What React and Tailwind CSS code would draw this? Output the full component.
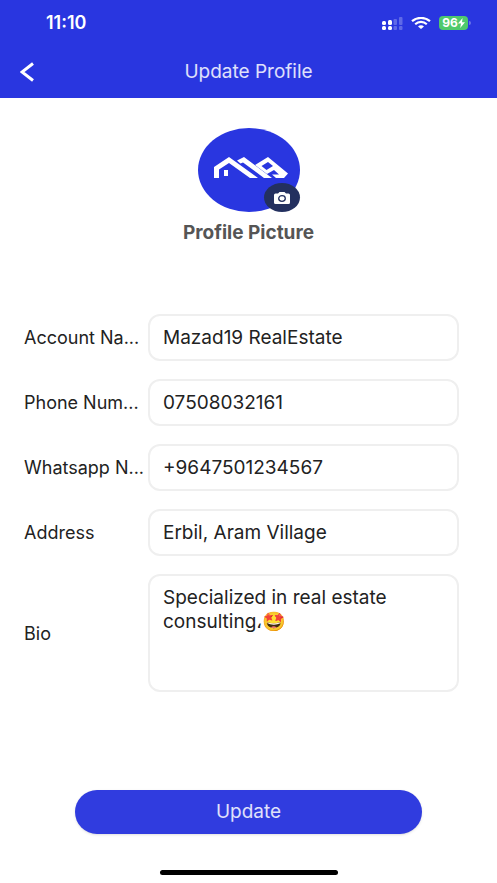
import { useState } from "react";

const initialProfile = {
    accountName: "Mazad19 RealEstate",
    phone: "07508032161",
    whatsapp: "+9647501234567",
    address: "Erbil, Aram Village",
    bio: "Specialized in real estate consulting،🤩",
};

const fields = [
    { name: "accountName", label: "Account Na...", type: "text" },
    { name: "phone", label: "Phone Num...", type: "tel" },
    { name: "whatsapp", label: "Whatsapp N...", type: "tel" },
    { name: "address", label: "Address", type: "text" },
];

const StatusBar = () => (
    <div className="flex items-center justify-between h-[46px] pl-[46px] pr-[26px]">
        <span className="text-[18px] leading-6 font-semibold">11:10</span>
        <div className="flex items-center gap-2">
            {/* Dual SIM signal */}
            <svg viewBox="0 0 22 13" className="w-[22px] h-[13px]" fill="currentColor">
                <rect x="1" y="4" width="4" height="4" rx="1.5" />
                <rect x="1" y="9" width="4" height="4" rx="1.5" />
                <rect x="7" y="3" width="4" height="5" rx="1.5" />
                <rect x="7" y="9" width="4" height="4" rx="1.5" />
                <g opacity="0.25">
                    <rect x="12.5" y="2" width="3.5" height="6" rx="1" />
                    <rect x="12.5" y="9" width="3.5" height="4" rx="1" />
                    <rect x="18" y="0" width="3.5" height="8" rx="1" />
                    <rect x="18" y="9" width="3.5" height="4" rx="1" />
                </g>
            </svg>
            <svg viewBox="0 0 20 12" className="w-5 h-3" fill="none" stroke="currentColor" strokeWidth="2.2">
                <path d="M1 4.2C6 -0.2 14 -0.2 19 4.2" />
                <path d="M4.2 7.2C7.5 4.2 12.5 4.2 15.8 7.2" />
                <path d="M7 9.4C8.8 7.9 11.2 7.9 13 9.4L10 12Z" fill="currentColor" stroke="none" />
            </svg>
            <div className="flex items-center gap-px">
                <div className="flex items-center justify-center w-[29px] h-[14px] rounded bg-[#4fc96c]">
                    <span className="text-xs leading-3 font-bold">96</span>
                    <svg viewBox="0 0 7 10" className="w-[7px] h-[10px]" fill="currentColor">
                        <path d="M4.6 0L0 5.6H3L2.2 10L7 4.2H4Z" />
                    </svg>
                </div>
                <div className="w-[2px] h-1 rounded-r bg-white/30" />
            </div>
        </div>
    </div>
);

const Avatar = () => (
    <div className="relative w-[102px] h-[84px]">
        <svg viewBox="0 0 102 84" className="w-full h-full">
            <ellipse cx="51" cy="42" rx="51" ry="42" fill="#2936e0" />
            <g fill="#fff">
                {/* House */}
                <path d="M16 50V39L31 29L60 50H52L31 35L21 41.5V50Z" />
                <rect x="26" y="42" width="4" height="6" />
                {/* Middle roof */}
                <path d="M39 32.5L46 29L74 50H66L45 34.5L42.5 35.500Z" />
                {/* Right roof, folded into a 9 */}
                <path fillRule="evenodd" d="M57 37L70 29L90 45.500L86 50H78L74 46.500H81L76 42L69 46ZM63.500 38L68.500 42L75 38L70 34Z" />
            </g>
        </svg>
        <button
            type="button"
            aria-label="Change picture"
            className="absolute right-0 bottom-0 flex items-center justify-center w-9 h-[29px] rounded-[50%] bg-[#23305f] text-white"
        >
            <svg viewBox="0 0 16 12" className="w-4 h-3">
                <path d="M4 1.500L5.500 0H10.500L12 1.500H14.500Q16 1.500 16 3V10.500Q16 12 14.500 12H1.500Q0 12 0 10.500V3Q0 1.500 1.500 1.500Z" fill="currentColor" />
                <ellipse cx="8" cy="6.500" rx="3.300" ry="2.800" fill="none" stroke="#23305f" strokeWidth="1.300" />
            </svg>
        </button>
    </div>
);

const App = () => {
    const [profile, setProfile] = useState(initialProfile);

    const handleChange = (e) => setProfile((prev) => ({ ...prev, [e.target.name]: e.target.value }));
    const handleSubmit = (e) => e.preventDefault();

    return (
        <div className="flex flex-col min-h-screen bg-white font-['Inter','Noto_Sans',sans-serif] text-[#222]">
            <header className="bg-[#2936e0] text-white">
                <StatusBar />
                <div className="grid grid-cols-[1fr_auto_1fr] items-center h-[52px] px-5">
                    <button type="button" aria-label="Back" className="w-4 h-5">
                        <svg viewBox="0 0 16 20" className="w-4 h-5" fill="none" stroke="currentColor" strokeWidth="3">
                            <path d="M13 1.500L2 10L13 18.500" />
                        </svg>
                    </button>
                    <h1 className="text-[19px] leading-6 text-white/85">Update Profile</h1>
                </div>
            </header>

            <form onSubmit={handleSubmit} className="flex flex-col flex-1">
                <section className="flex flex-col items-center gap-2 pt-[30px]">
                    <Avatar />
                    <h2 className="text-[19px] leading-[26px] font-bold text-[#555]">Profile Picture</h2>
                </section>

                <div className="flex flex-col gap-[18px] pt-[68px] pl-6 pr-[38px]">
                    {fields.map(({ name, label, type }) => (
                        <div key={name} className="flex items-center gap-[3px]">
                            <label htmlFor={name} className="w-[121px] shrink-0 whitespace-nowrap text-[18px]">{label}</label>
                            <input
                                id={name}
                                name={name}
                                type={type}
                                value={profile[name]}
                                onChange={handleChange}
                                className="flex-1 min-w-0 h-[47px] px-[13px] text-[19px] border-2 border-[#efefef] rounded-xl outline-none"
                            />
                        </div>
                    ))}
                    <div className="flex items-center gap-[3px]">
                        <label htmlFor="bio" className="w-[121px] shrink-0 whitespace-nowrap text-[18px]">Bio</label>
                        <textarea
                            id="bio"
                            name="bio"
                            value={profile.bio}
                            onChange={handleChange}
                            className="flex-1 min-w-0 h-[118px] px-[13px] py-[10px] text-[19px] leading-6 border-2 border-[#efefef] rounded-xl outline-none resize-none"
                        />
                    </div>
                </div>

                <div className="mt-auto px-[75px] pt-8 pb-9">
                    <button type="submit" className="w-full h-11 rounded-full bg-[#303cdf] text-[19px] text-white/85 shadow-sm">
                        Update
                    </button>
                </div>
            </form>

            <div className="mx-auto mb-2 w-[178px] h-[5px] rounded-full bg-black" />
        </div>
    );
};

export default App;
